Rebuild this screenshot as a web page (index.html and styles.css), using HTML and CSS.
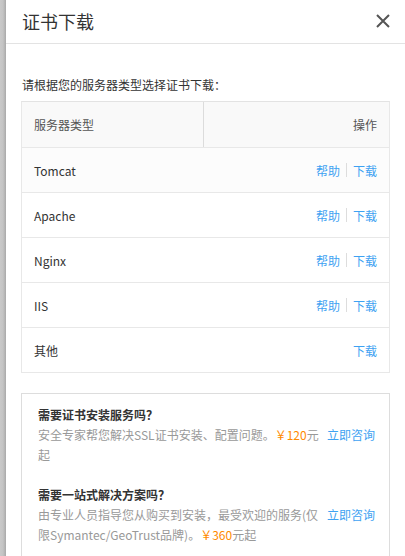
FILE: index.html
```html
<!DOCTYPE html>
<html lang="zh">
<head>
<meta charset="utf-8">
<link rel="stylesheet" href="styles.css">
</head>
<body>
<div class="screen">
  <div class="backdrop"></div>
  <div class="panel">
    <div class="panel-head">
      <h1 class="title">证书下载</h1>
      <svg class="close" width="16" height="16" viewBox="0 0 16 16"><path d="M2 2L14 14M14 2L2 14" stroke="#555" stroke-width="2" fill="none"/></svg>
    </div>
    <p class="intro">请根据您的服务器类型选择证书下载：</p>
    <div class="table">
      <div class="row head">
        <div class="cell name">服务器类型</div>
        <div class="cell ops">操作</div>
      </div>
      <div class="row"><div class="cell name">Tomcat</div><div class="cell ops"><a>帮助</a><span class="sep"></span><a>下载</a></div></div>
      <div class="row"><div class="cell name">Apache</div><div class="cell ops"><a>帮助</a><span class="sep"></span><a>下载</a></div></div>
      <div class="row"><div class="cell name">Nginx</div><div class="cell ops"><a>帮助</a><span class="sep"></span><a>下载</a></div></div>
      <div class="row"><div class="cell name">IIS</div><div class="cell ops"><a>帮助</a><span class="sep"></span><a>下载</a></div></div>
      <div class="row"><div class="cell name">其他</div><div class="cell ops"><a>下载</a></div></div>
    </div>
    <div class="service">
      <div class="block">
        <h2 class="block-title">需要证书安装服务吗？</h2>
        <p class="desc"><a class="consult">立即咨询</a>安全专家帮您解决SSL证书安装、配置问题。<span class="price">￥120</span>元起</p>
      </div>
      <div class="block">
        <h2 class="block-title">需要一站式解决方案吗？</h2>
        <p class="desc"><a class="consult">立即咨询</a>由专业人员指导您从购买到安装，最受欢迎的服务(仅限Symantec/GeoTrust品牌)。<span class="price">￥360</span>元起</p>
      </div>
    </div>
  </div>
</div>
</body>
</html>
```
FILE: styles.css
```css
* { box-sizing: border-box; }
html, body { margin: 0; padding: 0; }
body {
  width: 405px;
  height: 556px;
  overflow: hidden;
  background: #fff;
  font-family: "Microsoft YaHei", "Noto Sans CJK SC", "Open Sans", sans-serif;
  color: #333;
}
.screen { display: flex; height: 556px; }
.backdrop {
  width: 6px;
  flex: none;
  background: linear-gradient(to right, #c9c9c9 0, #c4c4c4 3px, #a9a9a9 6px);
}
.panel { flex: 1; position: relative; }
.panel-head {
  height: 44px;
  border-bottom: 1px solid #e3e3e3;
  display: flex;
  align-items: center;
  justify-content: space-between;
  padding: 0 14px 2px 16px;
}
.title {
  margin: 0;
  font-size: 18px;
  font-weight: normal;
  color: #333;
}
.close { display: block; }
.intro {
  margin: 32px 0 0 16px;
  font-size: 12px;
  line-height: 18px;
  color: #333;
}
.table {
  margin: 7px 15px 0 15px;
  border: 1px solid #e8e8e8;
  border-top-color: #e3e3e3;
}
.row {
  display: flex;
  height: 45px;
  border-top: 1px solid #e8e8e8;
  align-items: stretch;
  font-size: 12px;
}
.row:first-child { border-top: none; }
.row.head { background: #f9f9f9; color: #555; }
.row:nth-child(2) { background: #fcfcfc; }
.cell { display: flex; align-items: center; }
.name { padding-left: 12px; flex: 1; }
.row.head .name { border-right: 1px solid #dcdcdc; flex: none; width: 182px; }
.ops { flex: 1; justify-content: flex-end; padding-right: 12px; }
.ops a { color: #3ea2f2; }
.sep {
  display: inline-block;
  width: 1px;
  height: 14px;
  background: #ddd;
  margin: 0 6px;
}
.service {
  margin: 20px 15px 0 15px;
  border: 1px solid #ddd;
  padding: 11px 14px 20px 16px;
  height: 170px;
}
.block + .block { margin-top: 20px; }
.block-title {
  margin: 0;
  font-size: 12px;
  font-weight: bold;
  color: #333;
  line-height: 19px;
}
.desc {
  margin: 1px 0 0 0;
  font-size: 12px;
  line-height: 20px;
  color: #999;
  line-break: anywhere;
}
.consult { float: right; color: #3ea2f2; margin-left: 3px; }
.price { color: #ff8a00; }
```
